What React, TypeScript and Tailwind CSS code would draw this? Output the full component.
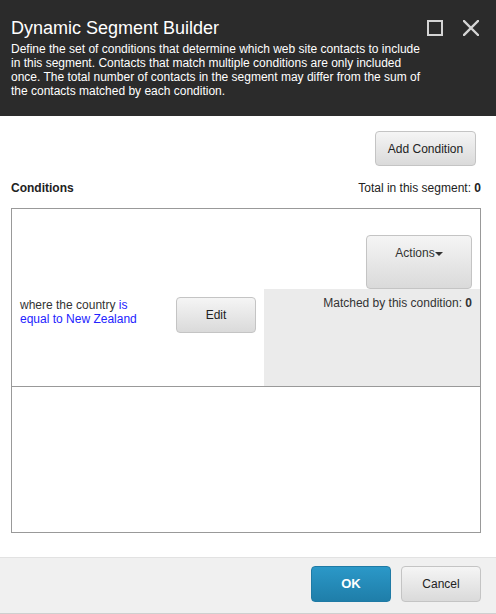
import React from "react";

const btn =
  "rounded-[4px] border border-[#c4c4c4] bg-gradient-to-b from-[#f5f5f5] to-[#dadada] text-[12px] text-[#222]";

export default function App() {
  return (
    <div
      className="w-[496px] h-[614px] bg-white flex flex-col overflow-hidden"
      style={{ fontFamily: '"Liberation Sans", Arial, sans-serif' }}
    >
      {/* Header */}
      <div className="h-[116px] bg-[#2b2b2b] px-[11px] pt-[17px] relative shrink-0">
        <div className="text-[18px] leading-[22px] text-white">Dynamic Segment Builder</div>
        <div className="mt-[3px] w-[415px] text-[12px] leading-[14px] text-white">
          Define the set of conditions that determine which web site contacts to include in this
          segment. Contacts that match multiple conditions are only included once. The total number
          of contacts in the segment may differ from the sum of the contacts matched by each
          condition.
        </div>
        <div className="absolute top-[20px] left-[427px] flex gap-[20px]">
          <svg width="16" height="16" viewBox="0 0 16 16">
            <rect x="1" y="1" width="14" height="14" fill="none" stroke="#d4d4d4" strokeWidth="2" />
          </svg>
          <svg width="16" height="16" viewBox="0 0 16 16">
            <path d="M1 1 L15 15 M15 1 L1 15" stroke="#d4d4d4" strokeWidth="2.4" strokeLinecap="square" />
          </svg>
        </div>
      </div>

      {/* Body */}
      <div className="flex-1 flex flex-col">
        <div className="flex justify-end pt-[15px] pr-[20px]">
          <button className={`${btn} w-[101px] h-[35px]`}>Add Condition</button>
        </div>
        <div className="mt-[15px] px-[11px] pr-[15px] flex justify-between text-[12px] leading-[14px] text-[#222]">
          <span className="font-bold">Conditions</span>
          <span>
            Total in this segment: <span className="font-bold">0</span>
          </span>
        </div>
        <div className="mt-[13px] ml-[11px] w-[470px] border border-[#999] flex flex-col">
          <div className="h-[178px] border-b border-[#999] flex">
            <div className="w-[252px] flex items-start pt-[88px] pl-[8px]">
              <div className="w-[128px] mr-[28px] text-[12px] leading-[14px] text-[#333] pt-[1px] flex flex-col">
                <span className="whitespace-nowrap">
                  where the country <span className="text-[#2222ff]">is</span>
                </span>
                <span className="whitespace-nowrap text-[#2222ff]">equal to New Zealand</span>
              </div>
              <button className={`${btn} w-[80px] h-[36px]`}>Edit</button>
            </div>
            <div className="flex-1 flex flex-col">
              <div className="h-[80px] flex items-end justify-end pr-[8px]">
                <button className={`${btn} w-[106px] h-[54px] flex items-start justify-center pt-[10px] text-[#333]`}>
                  <span className="flex items-center leading-[14px]">
                    Actions
                    <svg width="8" height="4" viewBox="0 0 8 4" className="mt-[2px]">
                      <path d="M0 0 L8 0 L4 4 Z" fill="#333" />
                    </svg>
                  </span>
                </button>
              </div>
              <div className="flex-1 bg-[#ebebeb] pt-[7px] pr-[8px] text-right text-[12px] leading-[14px] text-[#333]">
                Matched by this condition: <span className="font-bold">0</span>
              </div>
            </div>
          </div>
          <div className="h-[145px]" />
        </div>
      </div>

      {/* Footer */}
      <div className="h-[57px] shrink-0 bg-[#f0f0f0] border-t border-[#e2e2e2] border-b border-b-[#cfcfcf] flex justify-end items-start pt-[8px] pr-[15px] gap-[10px]">
        <button className="w-[80px] h-[36px] rounded-[4px] border border-[#1f7aa5] bg-gradient-to-b from-[#2b98c8] to-[#1f7ea9] text-white font-bold text-[13px]">
          OK
        </button>
        <button className={`${btn} w-[80px] h-[36px]`}>Cancel</button>
      </div>
    </div>
  );
}
